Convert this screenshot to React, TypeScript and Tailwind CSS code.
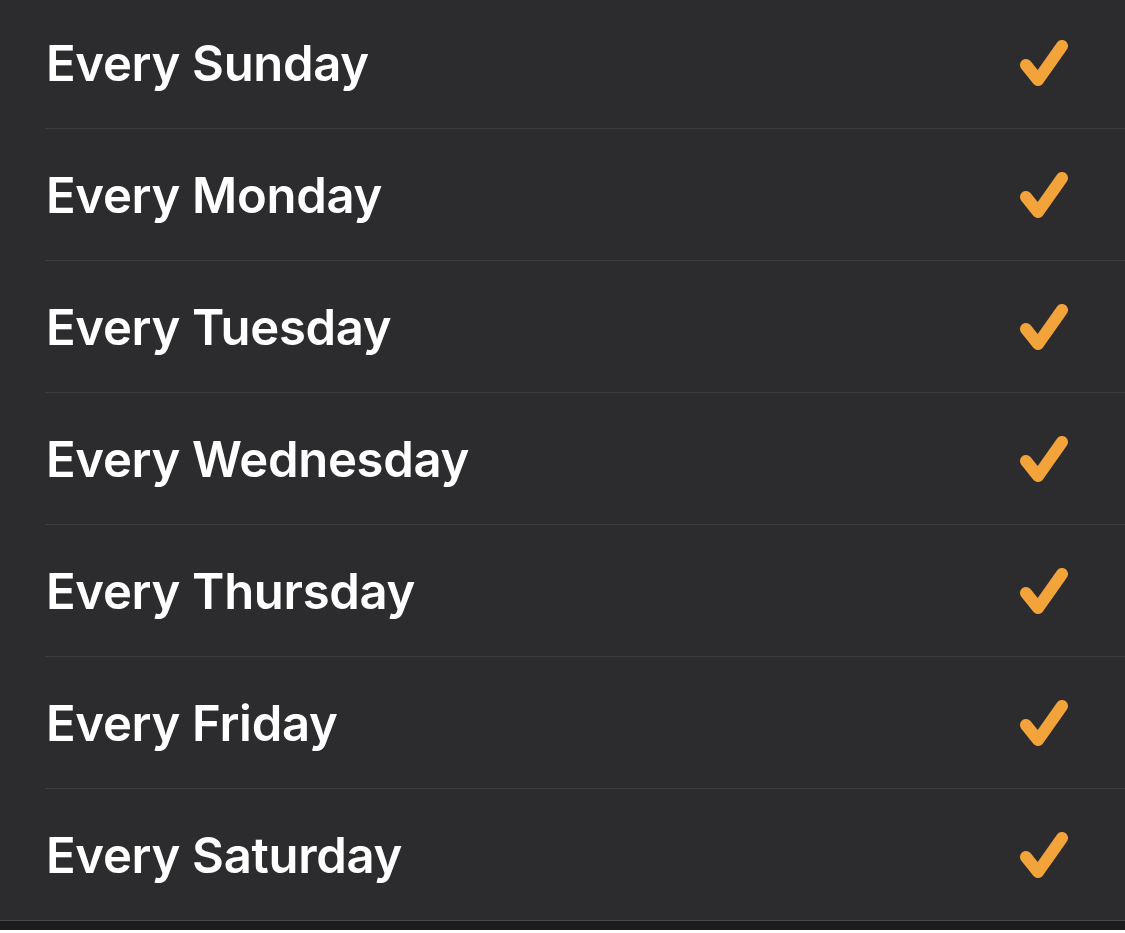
import React from "react";

const days = ["Sunday", "Monday", "Tuesday", "Wednesday", "Thursday", "Friday", "Saturday"];

function Check() {
  return (
    <svg width="60" height="60" viewBox="0 0 60 60" fill="none" aria-hidden="true">
      <path
        d="M8 32 L20 47 L44 13"
        stroke="#f2a33a"
        strokeWidth="12"
        strokeLinecap="round"
        strokeLinejoin="round"
      />
    </svg>
  );
}

export default function App() {
  return (
    <div className="min-h-screen bg-[#1c1c1e] font-['Inter','Liberation_Sans',sans-serif]">
      <ul className="-mt-[3px] bg-[#2c2c2e]">
        {days.map((day, i) => {
          const last = i === days.length - 1;
          return (
            <li key={day} className={last ? "border-b border-[#48484a]" : ""}>
              <div className="pl-[45px]">
                <div
                  className={`flex items-center justify-between pr-[47px] ${
                    last ? "h-[131px]" : "h-[132px] border-b border-[#3d3d40]"
                  }`}
                >
                  <span className="pl-[1px] pt-[2px] text-[49px] font-semibold tracking-[-0.3px] text-white">
                    Every {day}
                  </span>
                  <Check />
                </div>
              </div>
            </li>
          );
        })}
      </ul>
    </div>
  );
}
